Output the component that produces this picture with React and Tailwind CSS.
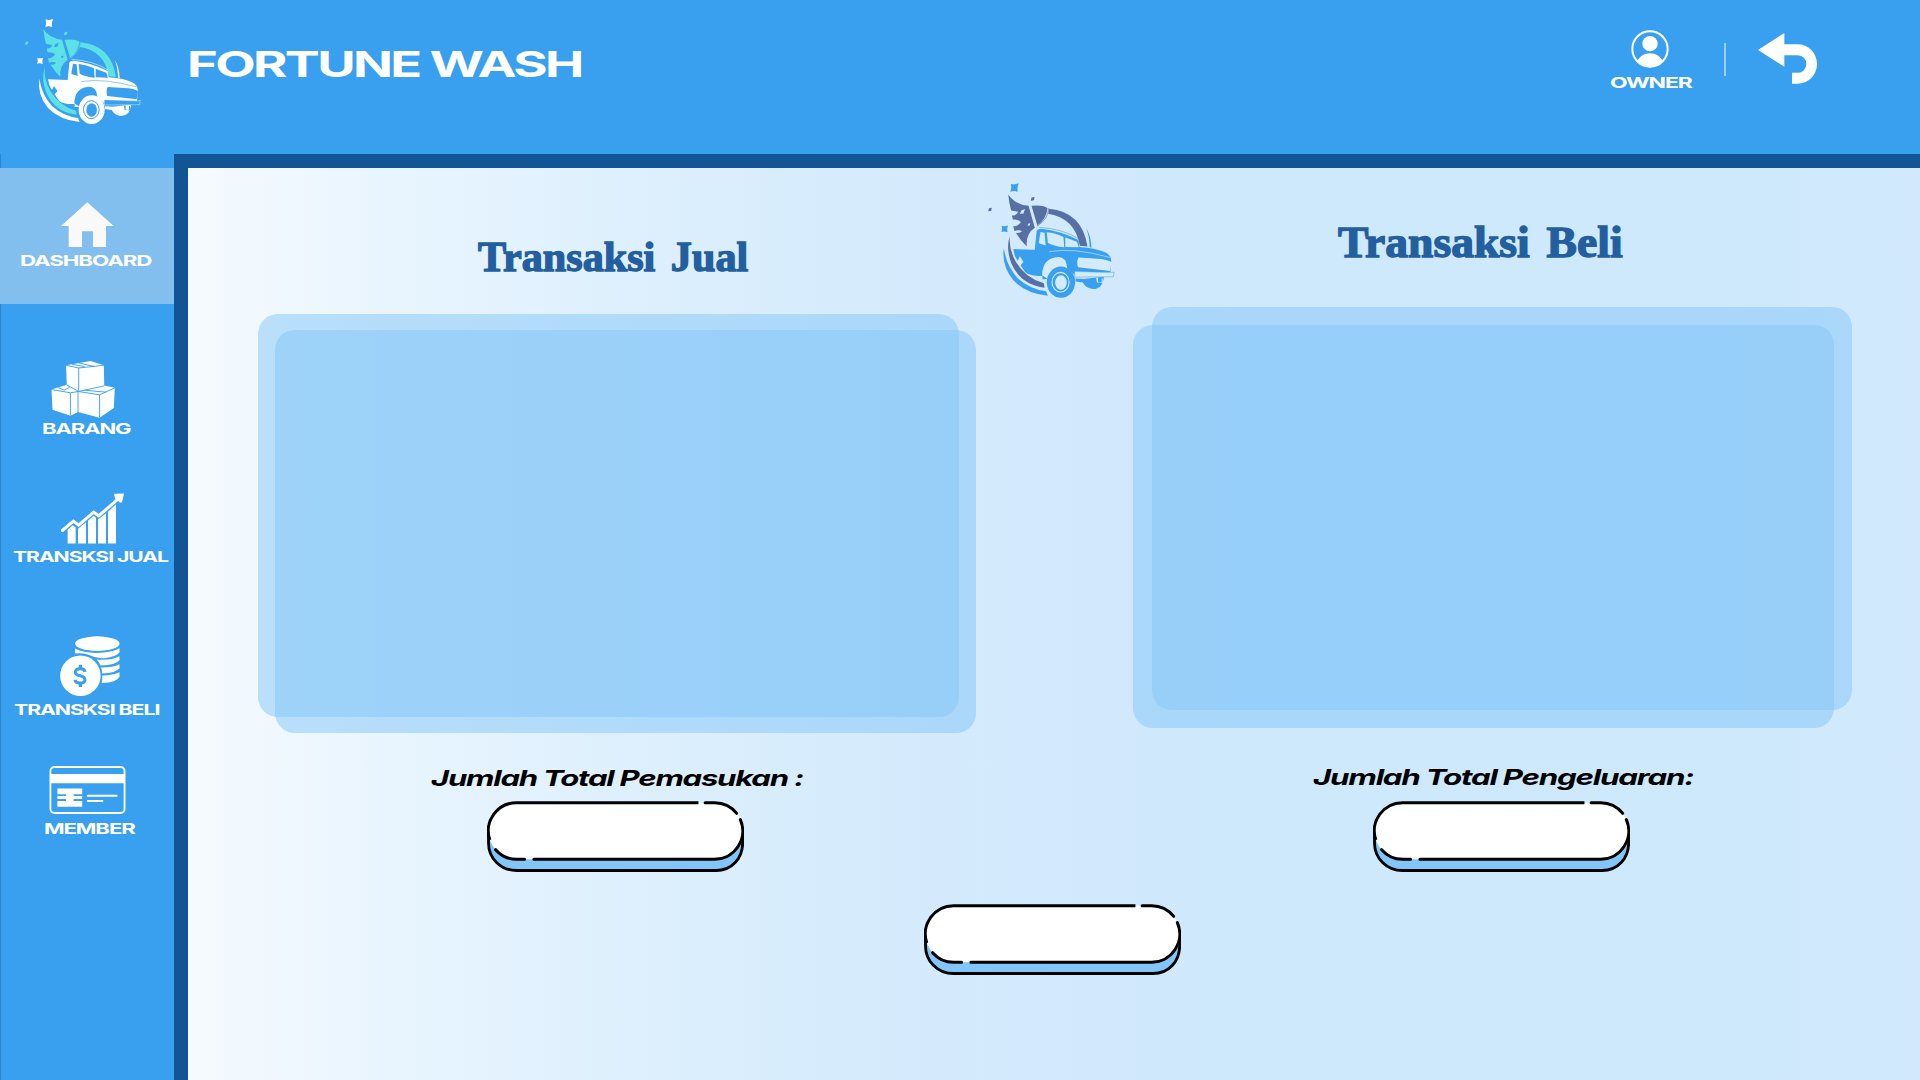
import { useLayoutEffect, useRef, useState } from "react";

// Stretches a line of text horizontally so that it spans the width of its box.
function Stretch({ className = "", children }) {
  const box = useRef(null);
  const line = useRef(null);
  const [scale, setScale] = useState(1);
  useLayoutEffect(() => {
    setScale(box.current.clientWidth / line.current.offsetWidth);
  }, []);
  return (
    <div ref={box} className={"flex items-center whitespace-nowrap " + className}>
      <span ref={line} className="inline-block shrink-0 origin-left leading-none" style={{ transform: `scaleX(${scale})` }}>
        {children}
      </span>
    </div>
  );
}

function Logo({ className, body, accent, hole }) {
  return (
    <svg className={className} viewBox="70 50 360 330">
      <g fill={body}>
        <path d="M137 83Q141 71 138 60Q148 65 160 58Q155 70 157 83Q147 78 137 83Z" />
        <path d="M112 193Q116 184 113 176Q121 179 130 175Q127 184 129 194Q121 190 112 193Z" />
        <path d="M345 181Q359 204 360 236L355 235Q355 206 345 181Z" />
        <path d="M119 238Q126 286 157 320Q190 350 235 356L240 368Q180 362 145 326Q112 285 119 238Z" />
      </g>
      <g fill={accent}>
        <path d="M193 107L195 98L203 97L202 106Z" />
        <path d="M76 136L78 128L86 126L84 135Z" />
        <path d="M131 90Q150 118 187 121L204 181Q179 197 182 233Q163 214 152 195Q162 198 169 191Q162 186 148 190L145 177Q156 178 166 166Q160 158 144 159L141 147Q152 150 158 137L139 134Q133 112 131 90Z" />
        <path d="M195 121Q226 118 239 127Q236 158 211 175Z" />
        <path d="M243 129Q334 137 349 233L328 231Q315 155 241 143Z" />
        <path d="M135 203Q132 240 152 275Q178 320 229 334L231 346Q165 338 140 280Q124 240 135 203Z" />
      </g>
      <path d="M242 128Q241 158 210 177" fill="none" stroke={accent} strokeWidth="1.8" />
      <path d="M163 143L167 134L177 130L173 142Z M184 176L186 170L192 169L190 175Z" fill={hole} />
      <g fill={body}>
        <path d="M145 240L204 242L209 191Q211 184 222 184Q276 190 324 215L327 234Q375 238 396 248Q416 257 414 275L412 304L314 302L313 322L240 322L225 323V314Q190 315 178 304L165 285L173 275L163 260L157 272L149 258Z" />
        <path d="M316 321L338 322L394 316Q391 350 364 350Q344 348 336 332L316 329Z" />
      </g>
      <path d="M216 180Q281 184 325 212" fill="none" stroke={body} strokeWidth="1.6" />
      <g fill={hole}>
        <path d="M220 193L231 195L234 230L215 224Q217 209 220 193Z" />
        <path d="M237 194Q262 196 283 207L285 235Q258 232 240 223Z" />
        <path d="M288 208L320 220L325 235L288 234Z" />
        <path d="M224 312Q225 264 269 262Q291 262 293 292L314 312L313 322L240 322Z" />
        <path d="M324 263L387 267Q416 272 415 278L411 300L323 290Q318 276 324 263Z" />
        <path d="M373 320L378 318L378 331L388 331V320L391 320V333L375 332Z" />
      </g>
      <path d="M244 247Q310 235 411 263" fill="none" stroke={hole} strokeWidth="1.7" />
      <path d="M314 301L412 305L422 303L420 316L314 317Z" fill={hole} stroke={body} strokeWidth="1.3" />
      <ellipse cx="276" cy="331" rx="39" ry="43" fill={body} />
      <ellipse cx="275" cy="331" rx="23.5" ry="27" fill={body} stroke={hole} strokeWidth="3" />
      <ellipse cx="276" cy="332" rx="16" ry="20" fill={hole} />
    </svg>
  );
}

function OwnerIcon() {
  return (
    <svg className="h-[38px] w-[38px]" viewBox="0 0 114 114" fill="#fff">
      <circle cx="57" cy="57" r="53" fill="none" stroke="#fff" strokeWidth="6" />
      <circle cx="57" cy="41" r="23" />
      <path d="M20 91Q32 70 57 70T94 91Q78 112 57 112T20 91Z" />
    </svg>
  );
}

function BackIcon() {
  return (
    <svg className="h-[51px] w-[59px]" viewBox="535 69 177 153" fill="#fff">
      <path d="M535 120L614 69V103H654A58 59 0 0 1 654 221H637V188H655A25 26 0 0 0 655 136H614V170Z" />
    </svg>
  );
}

function HomeIcon() {
  return (
    <svg className="ml-[61px] h-[45px] w-[53px]" viewBox="183 156 159 135" fill="#f9f9f9">
      <path d="M262 157L341 228H318V291H279V244H246V291H206V228H183Z" />
    </svg>
  );
}

function BoxesIcon() {
  return (
    <svg className="ml-[51px] h-[57px] w-[64px]" viewBox="153 632 192 172" fill="#fff">
      <path d="M198 645L272 632L312 645L313 706L345 713L342 774L299 803L234 786L211 797L157 779L154 718L200 704Z" />
      <g fill="none" stroke="#38a0ee" strokeWidth="2.8">
        <path d="M198 645L236 653L312 645M236 653V724M216 642L254 649M234 637L285 649" />
        <path d="M200 704L236 724L313 707M154 718L211 728L235 724M211 728V797M235 724L299 734L345 713M299 734V803M234 724V787M174 712L192 720L209 711M253 720L318 726" />
      </g>
    </svg>
  );
}

function ChartIcon() {
  return (
    <svg className="ml-[61px] h-[51px] w-[63px]" viewBox="183 68 189 152" fill="#fff">
      <path d="M203 219V178L218 164L227 170V219Z M234 219V175L258 155V219Z M264 219V151L281 136L288 142V219Z M294 219V147L318 128V219Z M324 219V124L348 101V219Z" />
      <path d="M187 180L220 152L236 164L281 125L296 136L354 86" fill="none" stroke="#fff" strokeWidth="9" strokeLinecap="round" />
      <path d="M342 70L372 69L366 95L360 97L345 83Z" />
    </svg>
  );
}

function CoinsIcon() {
  return (
    <svg className="ml-[60px] h-[60px] w-[60px]" viewBox="180 497 180 181" fill="#fff">
      <ellipse cx="292" cy="520" rx="67" ry="22" />
      <path d="M225 535Q260 553 318 546Q345 543 359 534V546Q350 559 318 563Q290 567 270 555Q248 546 225 550Z" />
      <path d="M290 568Q335 571 359 558V570Q348 584 302 586Q299 577 290 568Z" />
      <path d="M303 592Q340 592 359 582V594Q348 608 307 610Q307 601 303 592Z" />
      <path d="M307 616Q342 615 359 606V620Q352 637 305 639Q308 629 307 616Z" />
      <circle cx="241" cy="617" r="61" />
      <g fill="none" stroke="#38a0ee" strokeWidth="9">
        <path d="M255 605Q254 596 241 596Q226 596 226 606Q226 614 240 617Q255 620 255 630Q254 639 240 639Q226 639 225 629" />
        <path d="M241 584V596M241 638V651" strokeWidth="10" />
      </g>
    </svg>
  );
}

function CardIcon() {
  return (
    <svg className="ml-[49px] h-[48px] w-[77px]" viewBox="147 77 230 145" fill="#fff">
      <rect x="150" y="80" width="224" height="139" rx="12" fill="none" stroke="#fff" strokeWidth="5.5" />
      <path d="M150 101H374V129H150Z" />
      <path d="M171 145H246V162H220V168H246V177H220V183H246V200H171V183H197V177H171V168H197V162H171Z" />
      <path d="M263 167H350M263 183H307" stroke="#fff" strokeWidth="6" strokeLinecap="round" />
    </svg>
  );
}

function Pill({ className }) {
  return (
    <svg className={"h-[71px] w-[257px] " + className} viewBox="249 153 773 213" preserveAspectRatio="none">
      <path d="M253.500 242V278C253.500 325 290 361.500 338 361.500H938C985 361.500 1018 325 1018 278V242Z" fill="#82c6f9" stroke="#000" strokeWidth="8.500" />
      <rect x="253.500" y="158" width="764.500" height="170" rx="85" fill="#fff" />
      <g fill="none" stroke="#000" strokeWidth="9">
        <path d="M885 158H338A85 85 0 0 0 257.500 270" />
        <path d="M905 158H933A85 85 0 0 1 1000 190" strokeLinecap="round" />
        <path d="M1011 209A85 85 0 0 1 933 328H390" strokeLinecap="round" />
        <path d="M362 328H338A85 85 0 0 1 275 299" strokeLinecap="round" />
      </g>
    </svg>
  );
}

const label = "h-4 font-['Inter'] text-[15px] font-bold tracking-[-0.05em] text-white ";
const heading =
  "h-[42px] font-['Liberation_Serif'] font-bold text-[#235f9f] [word-spacing:0.12em] [-webkit-text-stroke:1.4px_#235f9f] ";
const total = "h-6 font-['Inter'] text-[22px] font-bold italic tracking-[-0.04em] text-black ";
const card = "col-start-1 row-start-1 h-[403px] rounded-[20px] bg-[#86c8f8]/52 ";

export default function App() {
  return (
    <div className="flex h-[1080px] w-[1920px] flex-col overflow-hidden bg-[#38a0ee] font-['Inter',sans-serif]">
      <header className="flex h-[154px] shrink-0 items-start">
        <Logo className="mt-[16px] ml-[23px] h-[110px] w-[120px]" body="#fff" accent="#5ce1e6" hole="#38a0ee" />
        <Stretch className="mt-[46px] ml-[44px] h-9 w-[395px] text-[36px] font-bold tracking-[-0.05em] text-white">FORTUNE WASH</Stretch>
        <div className="mt-[30px] ml-auto flex w-[82px] flex-col">
          <div className="ml-[21px]">
            <OwnerIcon />
          </div>
          <Stretch className={label + "mt-[6px] w-[81px]"}>OWNER</Stretch>
        </div>
        <div className="mt-[43px] ml-[32px] h-[33px] w-[2px] bg-[#9ccff6]" />
        <div className="mt-[33px] mr-[103px] ml-[32px]">
          <BackIcon />
        </div>
      </header>

      <div className="flex flex-1">
        <aside className="w-[174px] shrink-0 border-l border-[#2f86cf] pt-[14px]">
          <nav className="-ml-px">
            <div className="h-[136px] bg-[#82bfee] pt-[34px]">
              <HomeIcon />
              <Stretch className={label + "mt-[5px] ml-[20px] w-[131px]"}>DASHBOARD</Stretch>
            </div>
            <div className="mt-[57px]">
              <BoxesIcon />
              <Stretch className={label + "mt-[2px] ml-[42px] w-[88px]"}>BARANG</Stretch>
            </div>
            <div className="mt-[57px]">
              <ChartIcon />
              <Stretch className={label + "mt-[4px] ml-[13px] w-[155px]"}>TRANSKSI JUAL</Stretch>
            </div>
            <div className="mt-[72px]">
              <CoinsIcon />
              <Stretch className={label + "mt-[5px] ml-[14px] w-[146px]"}>TRANSKSI BELI</Stretch>
            </div>
            <div className="mt-[49px]">
              <CardIcon />
              <Stretch className={label + "mt-[6px] ml-[44px] w-[90px]"}>MEMBER</Stretch>
            </div>
          </nav>
        </aside>

        <main className="flex-1 border-t-[14px] border-l-[14px] border-[#135494] bg-[linear-gradient(90deg,#f5fafe_0%,#e6f4fe_14%,#ddeffd_27%,#d6ecfc_37%,#d2e8fd_52%,#cee9fc_61%,#cee9fc_88%,#d2e9fd_100%)]">
          <div className="flex">
            <section className="ml-[70px] w-[718px]">
              <Stretch className={heading + "mt-[68px] ml-[220px] w-[270px] text-[42px]"}>Transaksi Jual</Stretch>
              <div className="mt-[36px] grid h-[419px]">
                <div className={card + "w-[701px]"} />
                <div className={card + "mt-4 ml-[17px] w-[701px]"} />
              </div>
              <Stretch className={total + "mt-[33px] ml-[173px] w-[372px]"}>Jumlah Total Pemasukan :</Stretch>
              <Pill className="mt-[11px] ml-[229px]" />
            </section>
            <div className="w-[157px]">
              <Logo className="mt-[12px] ml-[10px] h-[120px] w-[131px]" body="#38a0ee" accent="#5770a3" hole="#d4eafd" />
            </div>
            <section className="w-[719px]">
              <Stretch className={heading + "mt-[54px] ml-[205px] w-[285px] text-[44px]"}>Transaksi Beli</Stretch>
              <div className="mt-[43px] grid h-[421px]">
                <div className={card + "ml-[19px] w-[700px]"} />
                <div className={card + "mt-[18px] w-[701px]"} />
              </div>
              <Stretch className={total + "mt-[37px] ml-[180px] w-[380px]"}>Jumlah Total Pengeluaran:</Stretch>
              <Pill className="mt-[12px] ml-[240px]" />
            </section>
          </div>
          <Pill className="mt-[32px] ml-[736px]" />
        </main>
      </div>
    </div>
  );
}
